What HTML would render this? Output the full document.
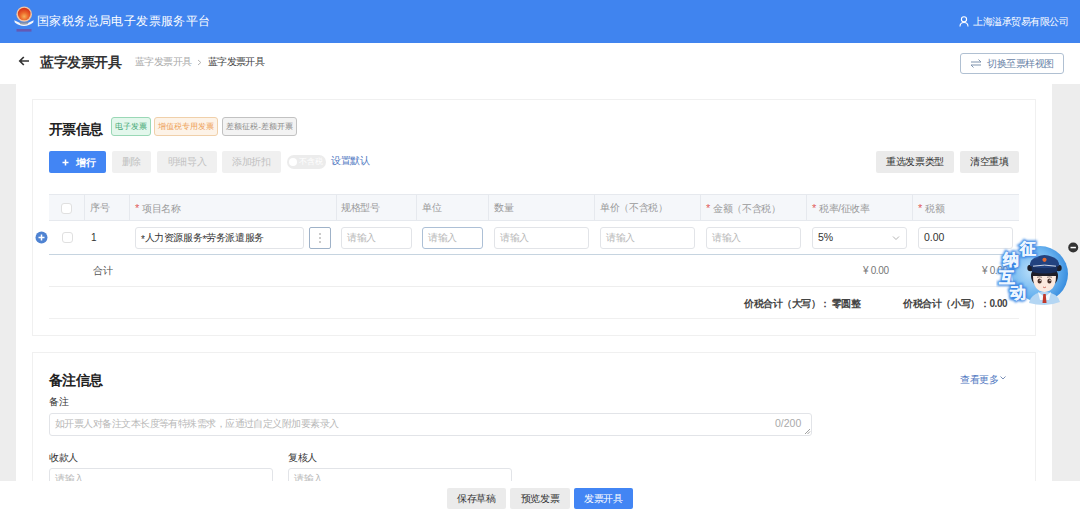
<!DOCTYPE html>
<html><head><meta charset="utf-8">
<style>
*{box-sizing:border-box;margin:0;padding:0}
html,body{width:1080px;height:516px;overflow:hidden;background:#fff;font-family:"Liberation Sans",sans-serif;color:#333}
.abs{position:absolute}
#hdr{position:absolute;left:0;top:0;width:1080px;height:43px;background:#4084ef}
.t{position:absolute;white-space:nowrap;line-height:1}
#gl{position:absolute;left:0;top:84px;width:16px;height:397px;background:#ededed}
#gr{position:absolute;left:1052px;top:84px;width:28px;height:397px;background:#ededed}
.card{position:absolute;border:1px solid #f0f0f0;background:#fff}
.tag{position:absolute;height:19px;border:1px solid;border-radius:3px;font-size:8px;line-height:17px;text-align:center}
.btn{position:absolute;border-radius:2px;font-size:10px;letter-spacing:-0.35px;text-align:center}
.inp{position:absolute;border:1px solid #e2e4e8;border-radius:3px;background:#fff;height:22px}
.ph{position:absolute;font-size:10px;letter-spacing:-0.35px;color:#b8b8b8;line-height:1;white-space:nowrap}
.hc{position:absolute;top:194px;height:27px;border-left:1px solid #e6e9ee}
.hl{position:absolute;font-size:10px;letter-spacing:-0.35px;color:#9a9a9a;line-height:1;white-space:nowrap;top:203px}
.req{color:#e25c5c;display:inline-block;margin-right:3px;font-size:11px;position:relative;top:0px;line-height:1}
#bar{position:absolute;left:0;top:481px;width:1080px;height:35px;background:#fff}
</style></head><body>
<div id="hdr">
  <svg class="abs" style="left:12px;top:4px" width="24" height="30" viewBox="0 0 24 30">
    <defs><radialGradient id="lg" cx="0.5" cy="0.7" r="0.6"><stop offset="0" stop-color="#f7b25a"/><stop offset="0.5" stop-color="#ec6a2c"/><stop offset="1" stop-color="#d8391c"/></radialGradient></defs>
    <ellipse cx="12.2" cy="10.2" rx="7.8" ry="7.6" fill="#f0c6a6"/>
    <ellipse cx="12.2" cy="10" rx="6.3" ry="6.3" fill="url(#lg)"/>
    <path d="M2.3 16.2 Q7 19.2 12 19.2 Q17 19.2 21.7 16.2 L21.2 18.6 Q17 22 12 22 Q7 22 2.8 18.6Z" fill="#f4f6fa"/>
    <path d="M7.5 17.5 Q12 19 16.5 17.5 L16 20 Q12 21.3 8 20Z" fill="#8a8f9e" opacity="0.8"/>
    <path d="M4.5 25 h15 v2.6 h-15z" fill="#7b3c8c" opacity="0.6"/>
  </svg>
  <div class="t" style="left:37px;top:15px;font-size:12px;letter-spacing:0.4px;color:#fff">国家税务总局电子发票服务平台</div>
  <svg class="abs" style="left:959px;top:16px" width="10" height="11" viewBox="0 0 10 11"><circle cx="5" cy="3.3" r="2.6" fill="none" stroke="#fff" stroke-width="1.1"/><path d="M1 10.5 Q1 6.5 5 6.5 Q9 6.5 9 10.5" fill="none" stroke="#fff" stroke-width="1.1"/></svg>
  <div class="t" style="left:973px;top:17px;font-size:10px;letter-spacing:-0.5px;color:#fff">上海溢承贸易有限公司</div>
</div>

<!-- subheader -->
<svg class="abs" style="left:18px;top:55px" width="12" height="12" viewBox="0 0 12 12"><path d="M11 6 H1.8 M5.8 2 L1.8 6 L5.8 10" fill="none" stroke="#333" stroke-width="1.7"/></svg>
<div class="t" style="left:40px;top:55px;font-size:14px;letter-spacing:-0.4px;font-weight:bold;color:#333">蓝字发票开具</div>
<div class="t" style="left:135px;top:57px;font-size:10px;letter-spacing:-0.6px;color:#aaa">蓝字发票开具</div>
<svg class="abs" style="left:197px;top:59px" width="5" height="7" viewBox="0 0 5 7"><path d="M1 1 L3.8 3.5 L1 6" fill="none" stroke="#aaa" stroke-width="0.9"/></svg>
<div class="t" style="left:208px;top:57px;font-size:10px;letter-spacing:-0.65px;color:#444">蓝字发票开具</div>
<div class="abs" style="left:960px;top:53px;width:104px;height:21px;border:1px solid #b0c0d2;border-radius:3px"></div>
<svg class="abs" style="left:970px;top:58px" width="12" height="11" viewBox="0 0 12 11"><path d="M1 4 H11 L8.5 1.5 M11 7 H1 L3.5 9.5" fill="none" stroke="#7f93ad" stroke-width="1"/></svg>
<div class="t" style="left:987px;top:59px;font-size:10px;letter-spacing:-0.5px;color:#6a84a8">切换至票样视图</div>

<div id="gl"></div><div id="gr"></div>

<!-- card 1 -->
<div class="card" style="left:32px;top:99px;width:1004px;height:237px"></div>
<div class="t" style="left:49px;top:122px;font-size:14px;letter-spacing:-0.6px;font-weight:bold;color:#222">开票信息</div>
<div class="tag" style="left:111px;top:117px;width:40px;background:#e3f7ec;border-color:#9ad8b6;color:#44a874">电子发票</div>
<div class="tag" style="left:154px;top:117px;width:64px;background:#fdf3e8;border-color:#f0d0aa;color:#eda25a">增值税专用发票</div>
<div class="tag" style="left:222px;top:117px;width:75px;background:#f3f3f3;border-color:#c2c2c2;color:#8a8a8a">差额征税-差额开票</div>

<div class="btn" style="left:49px;top:151px;width:57px;height:22px;background:#4285f4;color:#fff;line-height:22px"></div>
<svg class="abs" style="left:61px;top:158px" width="9" height="9" viewBox="0 0 9 9"><path d="M4.5 1.5V7.5M1.5 4.5H7.5" stroke="#fff" stroke-width="1.5"/></svg>
<div class="t" style="left:76px;top:158px;font-size:10px;letter-spacing:-0.35px;font-weight:bold;color:#fff">增行</div>
<div class="btn" style="left:112px;top:151px;width:39px;height:22px;background:#f0f0f0;color:#c2c2c2;line-height:22px">删除</div>
<div class="btn" style="left:157px;top:151px;width:60px;height:22px;background:#f0f0f0;color:#c2c2c2;line-height:22px">明细导入</div>
<div class="btn" style="left:222px;top:151px;width:59px;height:22px;background:#f0f0f0;color:#c2c2c2;line-height:22px">添加折扣</div>
<div class="abs" style="left:287px;top:155px;width:39px;height:14px;border-radius:7px;background:#ececec"></div>
<div class="abs" style="left:289px;top:158px;width:8px;height:8px;border-radius:50%;background:#fff"></div>
<div class="t" style="left:299px;top:158px;font-size:8px;color:#fff">不含税</div>
<div class="t" style="left:331px;top:156px;font-size:10px;letter-spacing:-0.35px;color:#5279c2">设置默认</div>
<div class="btn" style="left:876px;top:151px;width:78px;height:22px;background:#ebebeb;color:#333;line-height:22px">重选发票类型</div>
<div class="btn" style="left:960px;top:151px;width:59px;height:22px;background:#ebebeb;color:#333;line-height:22px">清空重填</div>

<!-- table header -->
<div class="abs" style="left:49px;top:194px;width:970px;height:27px;background:#f5f7fa;border-top:1px solid #e6e9ee;border-bottom:1px solid #e6e9ee"></div>
<div class="hc" style="left:84px"></div>
<div class="hc" style="left:129px"></div>
<div class="hc" style="left:336px"></div>
<div class="hc" style="left:416px"></div>
<div class="hc" style="left:488px"></div>
<div class="hc" style="left:594px"></div>
<div class="hc" style="left:700px"></div>
<div class="hc" style="left:806px"></div>
<div class="hc" style="left:912px"></div>
<div class="abs" style="left:61px;top:203px;width:11px;height:11px;border:1px solid #e0e0e0;border-radius:3px;background:#fff"></div>
<div class="hl" style="left:90px">序号</div>
<div class="hl" style="left:135px"><span class="req">*</span>项目名称</div>
<div class="hl" style="left:341px">规格型号</div>
<div class="hl" style="left:422px">单位</div>
<div class="hl" style="left:494px">数量</div>
<div class="hl" style="left:600px">单价（不含税）</div>
<div class="hl" style="left:706px"><span class="req">*</span>金额（不含税）</div>
<div class="hl" style="left:812px"><span class="req">*</span>税率/征收率</div>
<div class="hl" style="left:918px"><span class="req">*</span>税额</div>

<!-- row -->
<svg class="abs" style="left:35px;top:231px" width="13" height="13" viewBox="0 0 13 13"><circle cx="6.5" cy="6.5" r="6" fill="#4f83d2"/><path d="M6.5 3.5V9.5M3.5 6.5H9.5" stroke="#fff" stroke-width="1.5"/></svg>
<div class="abs" style="left:62px;top:232px;width:11px;height:11px;border:1px solid #e0e0e0;border-radius:3px;background:#fff"></div>
<div class="t" style="left:91px;top:233px;font-size:10px;color:#333">1</div>
<div class="inp" style="left:135px;top:227px;width:169px"></div>
<div class="t" style="left:141px;top:233px;font-size:10px;letter-spacing:-0.35px;color:#333"><span style="position:relative;top:1.5px">*</span>人力资源服务<span style="position:relative;top:1.5px">*</span>劳务派遣服务</div>
<div class="abs" style="left:309px;top:227px;width:22px;height:22px;border:1px solid #9fb2c8;border-radius:2px"></div>
<svg class="abs" style="left:318px;top:232px" width="4" height="12" viewBox="0 0 4 12"><circle cx="2" cy="2" r="0.8" fill="#8a8a8a"/><circle cx="2" cy="6" r="0.8" fill="#8a8a8a"/><circle cx="2" cy="10" r="0.8" fill="#8a8a8a"/></svg>
<div class="inp" style="left:341px;top:227px;width:71px"></div><div class="ph" style="left:347px;top:233px">请输入</div>
<div class="inp" style="left:422px;top:227px;width:61px;border-color:#adc0d6"></div><div class="ph" style="left:428px;top:233px">请输入</div>
<div class="inp" style="left:494px;top:227px;width:95px"></div><div class="ph" style="left:500px;top:233px">请输入</div>
<div class="inp" style="left:600px;top:227px;width:95px"></div><div class="ph" style="left:606px;top:233px">请输入</div>
<div class="inp" style="left:706px;top:227px;width:95px"></div><div class="ph" style="left:712px;top:233px">请输入</div>
<div class="inp" style="left:812px;top:227px;width:95px"></div><div class="t" style="left:818px;top:232px;font-size:10.5px;color:#333">5%</div>
<svg class="abs" style="left:892px;top:235px" width="8" height="6" viewBox="0 0 8 6"><path d="M1 1.5 L4 4.5 L7 1.5" fill="none" stroke="#aaa" stroke-width="0.9"/></svg>
<div class="inp" style="left:918px;top:227px;width:95px"></div><div class="t" style="left:924px;top:232px;font-size:10.5px;color:#333">0.00</div>
<div class="abs" style="left:49px;top:254px;width:970px;height:1px;background:#c6d4e0"></div>

<!-- total row -->
<div class="t" style="left:93px;top:266px;font-size:10px;letter-spacing:-0.35px;color:#555">合计</div>
<div class="t" style="left:863px;top:266px;font-size:10px;letter-spacing:-0.35px;color:#777">¥ 0.00</div>
<div class="t" style="left:982px;top:266px;font-size:10px;letter-spacing:-0.35px;color:#777">¥ 0.00</div>
<div class="abs" style="left:49px;top:286px;width:970px;height:1px;background:#eeeeee"></div>
<div class="t" style="left:744px;top:299px;font-size:10px;letter-spacing:-0.35px;font-weight:bold;letter-spacing:-0.5px;color:#444">价税合计（大写）： 零圆整</div>
<div class="t" style="left:903px;top:299px;font-size:10px;letter-spacing:-0.35px;font-weight:bold;letter-spacing:-0.4px;color:#444">价税合计（小写）：0.00</div>
<div class="abs" style="left:49px;top:318px;width:970px;height:1px;background:#f0f0f0"></div>

<!-- card 2 -->
<div class="card" style="left:32px;top:352px;width:1004px;height:160px"></div>
<div class="t" style="left:49px;top:373px;font-size:14px;letter-spacing:-0.6px;font-weight:bold;color:#222">备注信息</div>
<div class="t" style="left:960px;top:375px;font-size:10px;letter-spacing:-0.35px;color:#5279c2">查看更多</div>
<svg class="abs" style="left:999px;top:375px" width="8" height="6" viewBox="0 0 8 6"><path d="M1.5 1.5 L4 4 L6.5 1.5" fill="none" stroke="#7a90b8" stroke-width="1"/></svg>
<div class="t" style="left:49px;top:397px;font-size:10px;letter-spacing:-0.35px;color:#333">备注</div>
<div class="inp" style="left:49px;top:413px;width:763px;height:23px"></div>
<div class="ph" style="left:55px;top:419px;letter-spacing:-0.55px">如开票人对备注文本长度等有特殊需求，应通过自定义附加要素录入</div>
<div class="ph" style="left:775px;top:418px;color:#aaa;font-size:10.5px;letter-spacing:0">0/200</div>
<svg class="abs" style="left:804px;top:428px" width="7" height="7" viewBox="0 0 7 7"><path d="M6 1 L1 6 M6 3.5 L3.5 6" stroke="#888" stroke-width="0.8"/></svg>
<div class="t" style="left:49px;top:453px;font-size:10px;letter-spacing:-0.35px;color:#333">收款人</div>
<div class="t" style="left:288px;top:453px;font-size:10px;letter-spacing:-0.35px;color:#333">复核人</div>
<div class="inp" style="left:49px;top:468px;width:224px"></div><div class="ph" style="left:55px;top:474px">请输入</div>
<div class="inp" style="left:288px;top:468px;width:224px"></div><div class="ph" style="left:294px;top:474px">请输入</div>

<!-- bottom bar -->
<div id="bar"></div>
<div class="btn" style="left:447px;top:488px;width:59px;height:21px;background:#ebebeb;color:#333;line-height:21px">保存草稿</div>
<div class="btn" style="left:510px;top:488px;width:60px;height:21px;background:#ebebeb;color:#333;line-height:21px">预览发票</div>
<div class="btn" style="left:574px;top:488px;width:59px;height:21px;background:#4285f4;color:#fff;line-height:21px">发票开具</div>

<!-- mascot -->
<svg class="abs" style="left:996px;top:234px" width="84" height="74" viewBox="996 234 84 74">
  <defs>
    <radialGradient id="mg" cx="0.35" cy="0.45" r="0.7">
      <stop offset="0" stop-color="#b9def9"/>
      <stop offset="0.6" stop-color="#6db5f0"/>
      <stop offset="1" stop-color="#2f86dc"/>
    </radialGradient>
    <filter id="glow" x="-50%" y="-50%" width="200%" height="200%">
      <feGaussianBlur stdDeviation="1.1"/>
    </filter>
  </defs>
  <circle cx="1040" cy="274" r="28" fill="url(#mg)"/>
  <!-- shirt -->
  <path d="M1029 303 Q1031 293 1044.5 291.5 Q1058 293 1060 302 Q1052 305 1044.5 305 Q1036 305 1029 303Z" fill="#b4d6f3"/>
  <path d="M1038 292 L1044.5 297 L1051 292 L1049 300 L1040 300Z" fill="#ffffff" opacity="0.85"/>
  <path d="M1043.3 294 L1045.7 294 L1046.5 303 L1042.5 303Z" fill="#c0392b"/>
  <!-- hair -->
  <ellipse cx="1044.5" cy="276" rx="13.5" ry="12" fill="#1e1e28"/>
  <circle cx="1030.5" cy="268" r="3.2" fill="#1e1e28"/>
  <circle cx="1058.5" cy="268" r="3.2" fill="#1e1e28"/>
  <!-- face -->
  <path d="M1033 276 Q1033 291 1044.5 292 Q1056 291 1056 276 Z" fill="#fce9de"/>
  <ellipse cx="1039.6" cy="281" rx="2.1" ry="2.6" fill="#4a3028"/>
  <ellipse cx="1049.4" cy="281" rx="2.1" ry="2.6" fill="#4a3028"/>
  <circle cx="1040.2" cy="280.2" r="0.7" fill="#fff"/>
  <circle cx="1050" cy="280.2" r="0.7" fill="#fff"/>
  <path d="M1037 277.3 Q1039.5 276.3 1042 277.3 M1047 277.3 Q1049.5 276.3 1052 277.3" stroke="#3a2a24" stroke-width="0.6" fill="none"/>
  <path d="M1043 287 Q1044.5 288.2 1046 287" stroke="#c0392b" stroke-width="0.7" fill="none"/>
  <!-- hat -->
  <path d="M1030 266 Q1029 257 1044.5 255 Q1060 257 1059 266 Q1052 269 1044.5 269 Q1037 269 1030 266Z" fill="#22427f"/>
  <path d="M1031.5 266.5 Q1044.5 270 1057.5 266.5 L1057 272 Q1044.5 275 1032 272Z" fill="#182f5e"/>
  <path d="M1033 266.2 Q1044.5 264 1056 266.2" stroke="#e2e8f4" stroke-width="0.9" fill="none"/>
  <circle cx="1044.5" cy="259.8" r="2.1" fill="#e46a32"/>
  <!-- text glow -->
  <g font-family="Liberation Sans, sans-serif" font-weight="bold" font-size="16">
    <g fill="#3a86e4" stroke="#3a86e4" stroke-width="3.2" opacity="1" filter="url(#glow)">
      <text x="1020" y="254">征</text><text x="1003" y="265">纳</text><text x="999" y="283">互</text><text x="1010" y="298">动</text>
    </g>
    <g fill="#eef6ff" stroke="#eef6ff" stroke-width="0.3">
      <text x="1020" y="254">征</text><text x="1003" y="265">纳</text><text x="999" y="283">互</text><text x="1010" y="298">动</text>
    </g>
  </g>
</svg>
<svg class="abs" style="left:1067px;top:241px" width="13" height="13" viewBox="0 0 13 13"><circle cx="6.2" cy="6.5" r="5" fill="#333"/><rect x="3.5" y="5.8" width="5.4" height="1.5" fill="#fff"/></svg>
</body></html>
